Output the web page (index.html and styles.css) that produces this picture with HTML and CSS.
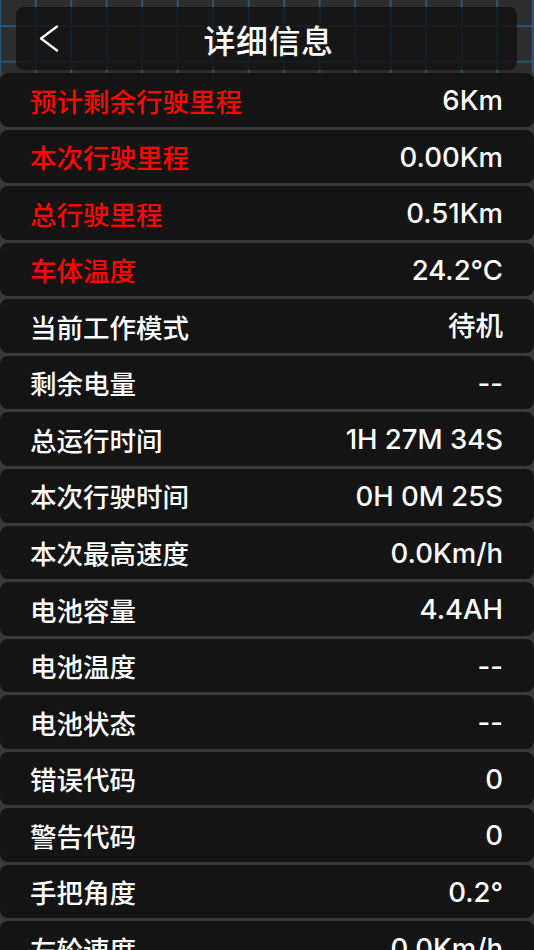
FILE: index.html
```html
<!DOCTYPE html>
<html lang="zh-CN">
<head>
<meta charset="utf-8">
<title>详细信息</title>
<link rel="stylesheet" href="styles.css">
</head>
<body>
<header class="topbar">
  <div class="back">
    <svg class="back-icon" width="20" height="28" viewBox="0 0 20 28">
      <polyline points="18,1.5 2,13.5 18,25.5" fill="none" stroke="#ffffff" stroke-width="2.2" stroke-linecap="round" stroke-linejoin="round"/>
    </svg>
  </div>
  <h1 class="title">详细信息</h1>
  <div class="spacer"></div>
</header>
<main class="list">
  <div class="row"><span class="label warn">预计剩余行驶里程</span><span class="value">6Km</span></div>
  <div class="row"><span class="label warn">本次行驶里程</span><span class="value">0.00Km</span></div>
  <div class="row"><span class="label warn">总行驶里程</span><span class="value">0.51Km</span></div>
  <div class="row"><span class="label warn">车体温度</span><span class="value">24.2°C</span></div>
  <div class="row"><span class="label">当前工作模式</span><span class="value">待机</span></div>
  <div class="row"><span class="label">剩余电量</span><span class="value">--</span></div>
  <div class="row"><span class="label">总运行时间</span><span class="value">1H 27M 34S</span></div>
  <div class="row"><span class="label">本次行驶时间</span><span class="value">0H 0M 25S</span></div>
  <div class="row"><span class="label">本次最高速度</span><span class="value">0.0Km/h</span></div>
  <div class="row"><span class="label">电池容量</span><span class="value">4.4AH</span></div>
  <div class="row"><span class="label">电池温度</span><span class="value">--</span></div>
  <div class="row"><span class="label">电池状态</span><span class="value">--</span></div>
  <div class="row"><span class="label">错误代码</span><span class="value">0</span></div>
  <div class="row"><span class="label">警告代码</span><span class="value">0</span></div>
  <div class="row"><span class="label">手把角度</span><span class="value">0.2°</span></div>
  <div class="row"><span class="label">左轮速度</span><span class="value">0.0Km/h</span></div>
</main>
</body>
</html>
```
FILE: styles.css
```css
html, body {
  margin: 0;
  padding: 0;
}
body {
  width: 534px;
  height: 950px;
  overflow: hidden;
  background-color: #2d2d2d;
  background-image:
    linear-gradient(to right, #2a5776 1.6px, transparent 1.6px),
    linear-gradient(to bottom, #2a5776 1.6px, transparent 1.6px);
  background-size: 35.5px 35.5px;
  background-position: -0.8px 25.2px;
  font-family: "Inter", "Noto Sans CJK SC", sans-serif;
  color: #ffffff;
}
.topbar {
  margin: 7px 17px 0 16px;
  height: 63px;
  border-radius: 8px;
  background: rgba(16, 16, 16, 0.8);
  display: grid;
  grid-template-columns: 1fr auto 1fr;
  align-items: center;
}
.back {
  padding-left: 23px;
  display: flex;
  align-items: center;
}
.back-icon {
  display: block;
}
.title {
  margin: 0;
  font-family: "Noto Sans CJK SC", sans-serif;
  font-size: 32px;
  font-weight: 500;
  letter-spacing: 0.5px;
  line-height: 1;
  color: #ffffff;
  padding-left: 4px;
}
.list {
  margin-top: 3px;
  display: flex;
  flex-direction: column;
  gap: 3px;
  background: #393939;
}
.row {
  height: 53.57px;
  flex: none;
  box-sizing: border-box;
  border-radius: 8px;
  background: rgba(18, 18, 18, 0.94);
  display: flex;
  align-items: center;
  justify-content: space-between;
  padding: 2px 31px 0 30px;
}
.label {
  font-family: "Noto Sans CJK SC", sans-serif;
  font-size: 26.5px;
  font-weight: 500;
  line-height: 1;
  color: #ffffff;
}
.label.warn {
  color: #ff0505;
}
.value {
  font-family: "Inter", "Noto Sans CJK SC", sans-serif;
  font-size: 27.5px;
  font-weight: 500;
  line-height: 1;
  color: #ffffff;
}
```
